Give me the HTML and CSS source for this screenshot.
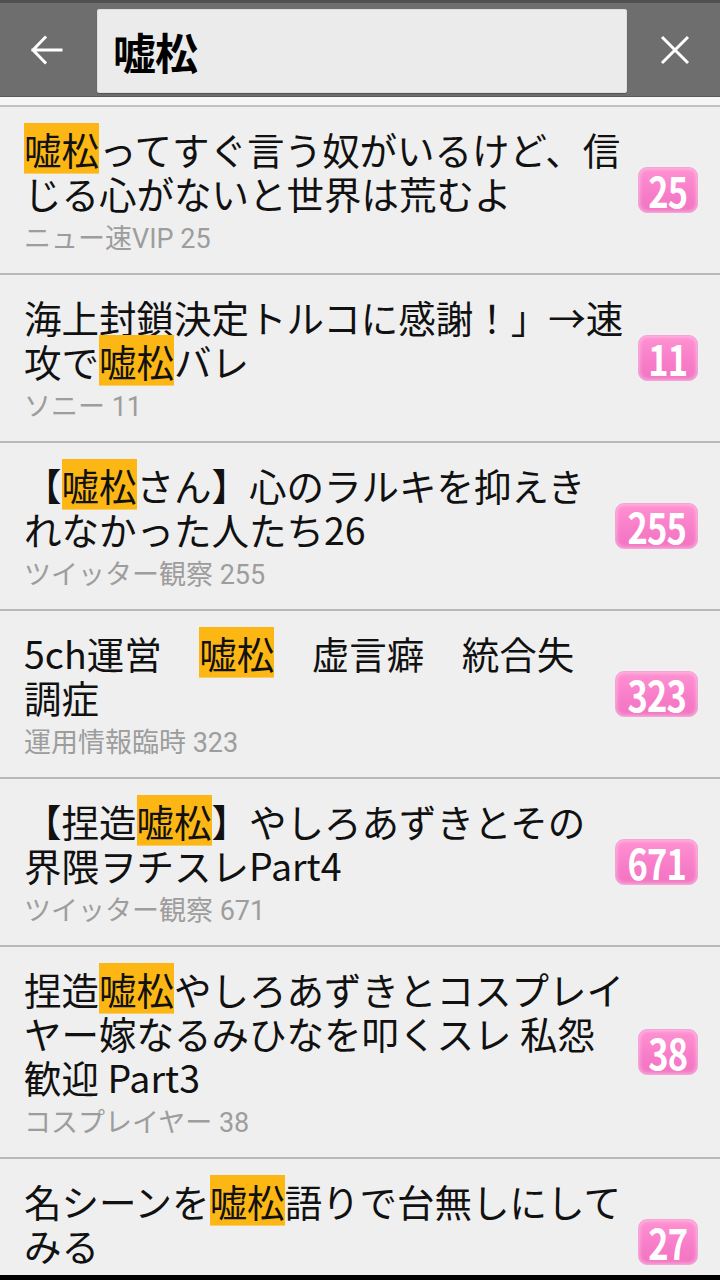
FILE: index.html
```html
<!DOCTYPE html>
<html lang="ja">
<head>
<meta charset="utf-8">
<title>検索</title>
<link rel="stylesheet" href="styles.css">
</head>
<body>
<div class="screen">
  <header class="topbar">
    <button class="icon-btn back" aria-label="戻る">
      <svg width="34" height="34" viewBox="0 0 34 34"><path d="M3 17 H31 M15 4.5 L3 17 L15 29.5" fill="none" stroke="#fff" stroke-width="3" stroke-linecap="square"/></svg>
    </button>
    <div class="search-box">嘘松</div>
    <button class="icon-btn close" aria-label="クリア">
      <svg width="30" height="30" viewBox="0 0 30 30"><path d="M2 2 L28 28 M28 2 L2 28" fill="none" stroke="#fff" stroke-width="3"/></svg>
    </button>
  </header>
  <div class="bar-shadow"></div>
  <ul class="list">
    <li class="item">
      <div class="body">
        <div class="title"><mark>嘘松</mark>ってすぐ言う奴がいるけど、信じる心がないと世界は荒むよ</div>
        <div class="meta">ニュー速VIP 25</div>
      </div>
      <span class="badge"><span class="num">25</span></span>
    </li>
    <li class="item">
      <div class="body">
        <div class="title">海上封鎖決定トルコに感謝！」→速攻で<mark>嘘松</mark>バレ</div>
        <div class="meta">ソニー 11</div>
      </div>
      <span class="badge"><span class="num">11</span></span>
    </li>
    <li class="item">
      <div class="body">
        <div class="title">【<mark>嘘松</mark>さん】心のラルキを抑えきれなかった人たち26</div>
        <div class="meta">ツイッター観察 255</div>
      </div>
      <span class="badge"><span class="num">255</span></span>
    </li>
    <li class="item">
      <div class="body">
        <div class="title">5ch運営　<mark>嘘松</mark>　虚言癖　統合失調症</div>
        <div class="meta">運用情報臨時 323</div>
      </div>
      <span class="badge"><span class="num">323</span></span>
    </li>
    <li class="item">
      <div class="body">
        <div class="title">【捏造<mark>嘘松</mark>】やしろあずきとその界隈ヲチスレPart4</div>
        <div class="meta">ツイッター観察 671</div>
      </div>
      <span class="badge"><span class="num">671</span></span>
    </li>
    <li class="item">
      <div class="body">
        <div class="title">捏造<mark>嘘松</mark>やしろあずきとコスプレイヤー嫁なるみひなを叩くスレ 私怨歓迎 Part3</div>
        <div class="meta">コスプレイヤー 38</div>
      </div>
      <span class="badge"><span class="num">38</span></span>
    </li>
    <li class="item">
      <div class="body">
        <div class="title">名シーンを<mark>嘘松</mark>語りで台無しにしてみる</div>
        <div class="meta"></div>
      </div>
      <span class="badge"><span class="num">27</span></span>
    </li>
  </ul>
  <div class="navbar"></div>
</div>
</body>
</html>
```

FILE: styles.css
```css
* { box-sizing: border-box; }
html, body {
  margin: 0;
  padding: 0;
  background: #efefef;
}
body {
  font-family: "Noto Sans CJK JP", "Noto Sans", sans-serif;
  color: #161616;
}
.screen {
  width: 720px;
  height: 1280px;
  display: flex;
  flex-direction: column;
  overflow: hidden;
}
.topbar {
  height: 97px;
  flex: none;
  display: flex;
  align-items: center;
  background: #6e6e6e;
  border-top: 3px solid #505050;
  border-bottom: 1px solid #5a5a5a;
}
.icon-btn {
  border: 0;
  background: none;
  padding: 0;
  display: flex;
  align-items: center;
  justify-content: center;
  height: 100%;
}
.back { width: 97px; padding-right: 4px; }
.close { width: 93px; padding-left: 3px; }
.search-box {
  flex: 1;
  height: 84px;
  margin-top: 2px;
  background: #ebebeb;
  border-radius: 3px;
  box-shadow: 0 1px 1px rgba(0,0,0,0.25), inset 0 0 0 1px #dedede;
  font-size: 43px;
  font-weight: 700;
  line-height: 84px;
  padding-left: 16px;
  color: #000;
  letter-spacing: -1px;
}
.bar-shadow {
  flex: none;
  height: 10px;
  background: #f6f6f6;
  border-bottom: 2px solid #c2c2c2;
}
.list {
  list-style: none;
  margin: 0;
  padding: 0;
  flex: 1;
  overflow: hidden;
}
.item {
  display: flex;
  align-items: center;
  gap: 12px;
  padding: 20px 22px 16px 24px;
  border-bottom: 2px solid #b9b9b9;
}
.body {
  flex: 1;
  min-width: 0;
}
.title {
  font-size: 37.5px;
  line-height: 44px;
  font-weight: 400;
  color: #111;
  margin-bottom: 6px;
}
mark {
  color: inherit;
  background: linear-gradient(#fcb714, #fcb714) no-repeat center / 100% 92%;
}
.meta {
  font-family: Roboto, "Noto Sans CJK JP", sans-serif;
  font-size: 27px;
  line-height: 36px;
  min-height: 36px;
  color: #9d9d9d;
}
.badge {
  flex: none;
  height: 46px;
  min-width: 60px;
  padding: 0 5px;
  border-radius: 9px;
  background: linear-gradient(#ff92d2, #f77cc8 60%, #f274c2);
  border: 1px solid #f3a6d6;
  box-shadow: inset 0 0 4px rgba(255,255,255,0.6);
  color: #fff;
  font-family: "Noto Sans CJK JP", sans-serif;
  font-size: 42px;
  font-weight: 700;
  line-height: 44px;
  letter-spacing: -1px;
  text-align: center;
  margin-top: -5px;
}
.num {
  display: inline-block;
  transform: scaleX(0.82);
}
.navbar {
  flex: none;
  height: 5px;
  background: #000;
}
```
